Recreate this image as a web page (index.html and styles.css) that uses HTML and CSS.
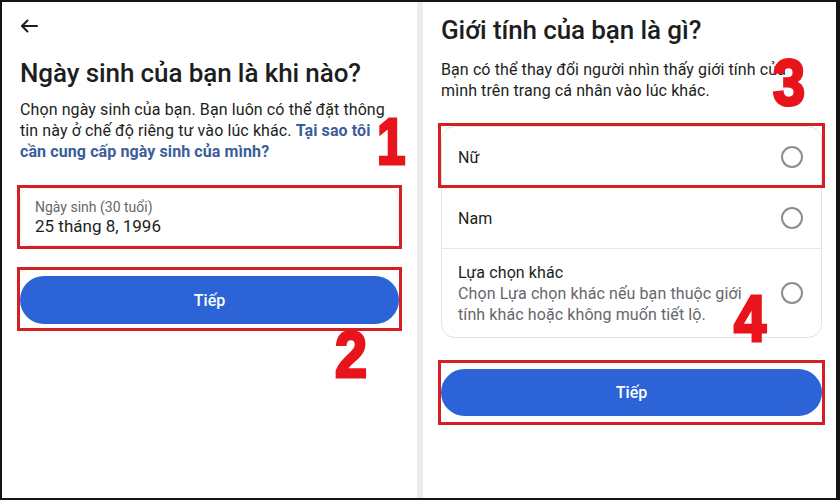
FILE: index.html
```html
<!DOCTYPE html>
<html lang="vi">
<head>
<meta charset="utf-8">
<title>Đăng ký</title>
<link rel="stylesheet" href="styles.css">
</head>
<body>
<div class="frame">
  <section class="panel panel-left">
    <div class="back">
      <svg width="18" height="14" viewBox="0 0 18 14" fill="none" stroke="#1c1e21" stroke-width="2" stroke-linecap="round" stroke-linejoin="round"><path d="M17 7H2"/><path d="M7.5 1.5L2 7l5.5 5.5"/></svg>
    </div>
    <h1 class="title">Ngày sinh của bạn là khi nào?</h1>
    <p class="desc">Chọn ngày sinh của bạn. Bạn luôn có thể đặt thông tin này ở chế độ riêng tư vào lúc khác. <a class="link">Tại sao tôi cần cung cấp ngày sinh của mình?</a></p>
    <div class="mark mark-field">
      <div class="field">
        <div class="field-label">Ngày sinh (30 tuổi)</div>
        <div class="field-value">25 tháng 8, 1996</div>
      </div>
    </div>
    <div class="mark mark-btn">
      <button class="btn">Tiếp</button>
    </div>
  </section>
  <div class="divider"></div>
  <section class="panel panel-right">
    <h1 class="title">Giới tính của bạn là gì?</h1>
    <p class="desc">Bạn có thể thay đổi người nhìn thấy giới tính của mình trên trang cá nhân vào lúc khác.</p>
    <div class="card">
      <div class="row row-1"><span class="opt">Nữ</span><span class="radio"></span></div>
      <div class="row row-2"><span class="opt">Nam</span><span class="radio"></span></div>
      <div class="row row-3">
        <div class="opt-block">
          <div class="opt">Lựa chọn khác</div>
          <div class="opt-sub">Chọn Lựa chọn khác nếu bạn thuộc giới tính khác hoặc không muốn tiết lộ.</div>
        </div>
        <span class="radio"></span>
      </div>
      <div class="mark-overlay"></div>
    </div>
    <div class="mark mark-btn2">
      <button class="btn btn2">Tiếp</button>
    </div>
  </section>
  <span class="num num-1">1</span>
  <span class="num num-2">2</span>
  <span class="num num-3">3</span>
  <span class="num num-4">4</span>
</div>
</body>
</html>
```
FILE: styles.css
```css
* { box-sizing: border-box; }
html, body { margin: 0; padding: 0; background: #fff; }
body { font-family: Roboto, "Noto Sans", "Liberation Sans", sans-serif; color: #1c1e21; }

.frame {
  position: relative;
  width: 840px;
  height: 500px;
  display: flex;
  border-top: 2px solid #141414;
  border-left: 2px solid #141414;
  border-right: 4px solid #141414;
  border-bottom: 2px solid #141414;
  overflow: hidden;
  background: #fff;
}

.panel { display: flex; flex-direction: column; }
.panel-left { width: 415px; padding: 17px 18px 0 18px; }
.panel-right { flex: 1; padding: 12px 14px 0 18px; }
.divider { width: 6px; background: #ececec; }

.back { height: 14px; line-height: 0; }

.title {
  margin: 0;
  font-size: 26px;
  line-height: 32px;
  font-weight: 500;
  letter-spacing: -0.1px;
}
.panel-left .title { margin-top: 24px; }

.desc {
  margin: 10px 0 0 0;
  font-size: 16px;
  line-height: 21px;
  letter-spacing: 0.1px;
  color: #1c1e21;
}
.panel-right .desc { margin-top: 13px; }
.link { color: #3a5d9c; font-weight: 700; }

.mark { border: 3px solid #d41f24; }
.mark-field { margin: 23px -3px 0 -3px; }
.field {
  background: #fff;
  border: 1px solid #ececec;
  border-radius: 10px;
  padding: 9px 14px 8px 14px;
}
.field-label { font-size: 14px; line-height: 18px; color: #65676b; }
.field-value { font-size: 17px; line-height: 21px; color: #1c1e21; }

.mark-btn { margin: 18px -3px 0 -3px; padding: 6px 0 4px 0; }
.btn {
  display: block;
  width: 100%;
  height: 48px;
  border: 0;
  border-radius: 24px;
  background: #2c64d7;
  color: #fff;
  font-family: inherit;
  font-size: 16px;
  font-weight: 500;
}

.card {
  position: relative;
  margin-top: 25px;
  border: 1px solid #e2e3e6;
  border-radius: 14px;
}
.row {
  display: flex;
  align-items: center;
  justify-content: space-between;
  padding: 0 18px 0 16px;
}
.row-1 { height: 60px; }
.row-2 { height: 61px; border-top: 1px solid #e6e7ea; }
.row-3 { height: 89px; border-top: 1px solid #e6e7ea; }
.opt { font-size: 16px; line-height: 21px; color: #1c1e21; letter-spacing: 0.1px; }
.opt-block { flex: 1; margin-right: 20px; }
.opt-sub { font-size: 16px; line-height: 21px; color: #65676b; letter-spacing: 0.1px; }
.radio {
  flex: none;
  width: 22px;
  height: 22px;
  border: 2px solid #8a8d91;
  border-radius: 50%;
}
.mark-overlay {
  position: absolute;
  top: -4px;
  left: -4px;
  right: -4px;
  height: 65px;
  border: 3px solid #d41f24;
}

.mark-btn2 { margin: 22px -3px 0 -3px; padding: 6px 0 6px 0; }
.btn2 { height: 47px; }

.num {
  position: absolute;
  font-family: "Liberation Sans", Arial, sans-serif;
  font-weight: 700;
  font-size: 64px;
  line-height: 64px;
  color: #e8141c;
  -webkit-text-stroke: 3px #e8141c;
  transform-origin: left top;
  transform: scaleX(0.9);
}
.num-1 { left: 375px; top: 108px; transform: scaleX(0.8); }
.num-2 { left: 333px; top: 321px; }
.num-3 { left: 771px; top: 49px; }
.num-4 { left: 732px; top: 285px; }
```
